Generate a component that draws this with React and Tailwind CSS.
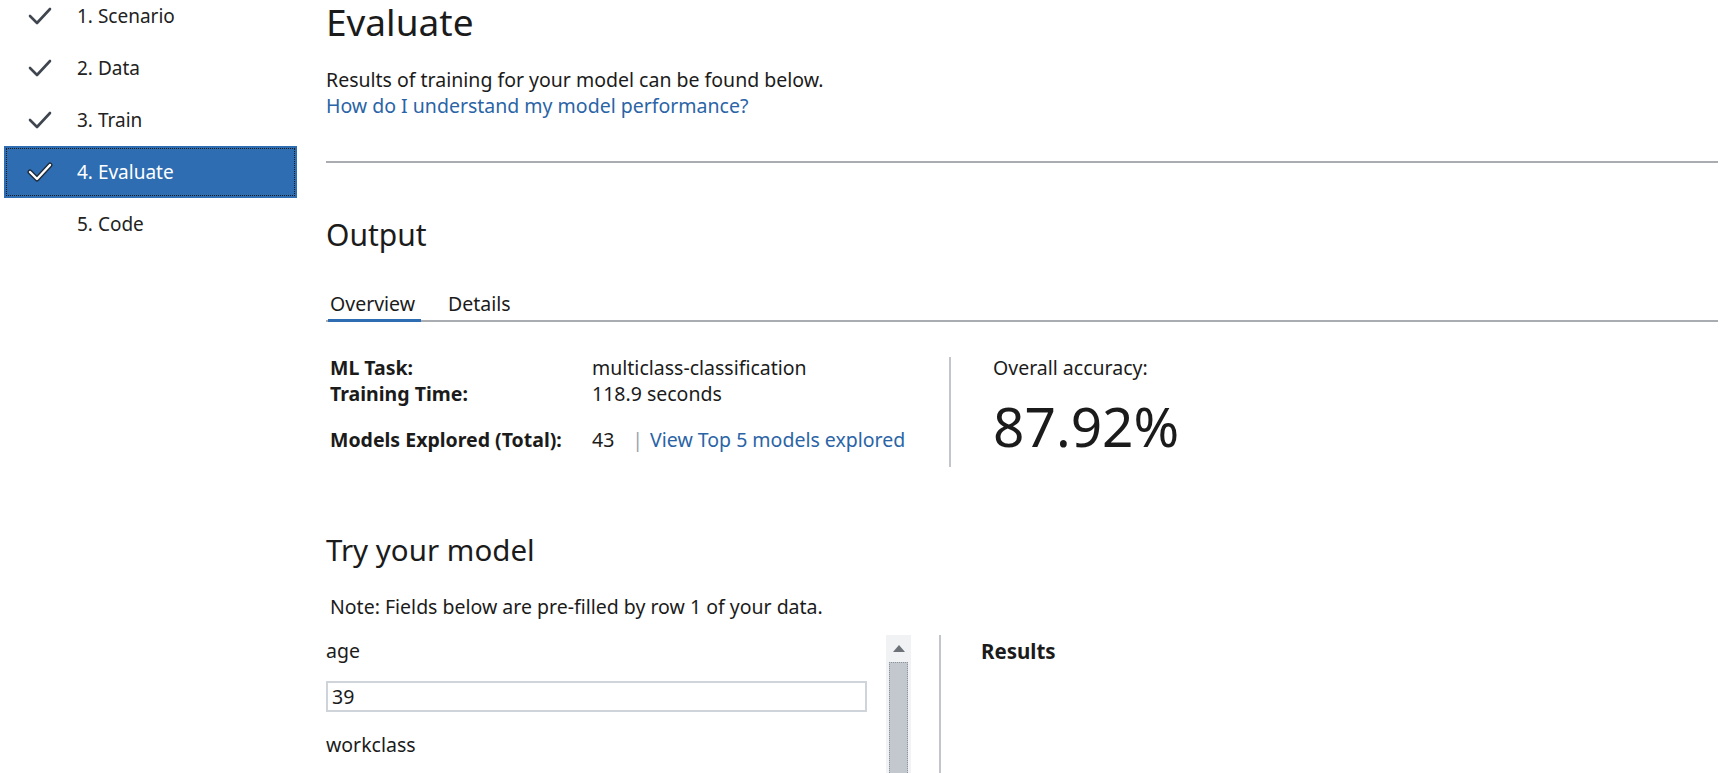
import React from "react";

const steps = [
  { label: "1. Scenario", done: true },
  { label: "2. Data", done: true },
  { label: "3. Train", done: true },
  { label: "4. Evaluate", done: true, active: true },
  { label: "5. Code", done: false },
];

function Check({ active }) {
  return (
    <svg width="26" height="22" viewBox="0 0 26 22" fill="none">
      {active && (
        <polyline points="3,11 10,18 23,4" stroke="#1e2a38" strokeWidth="5" strokeLinecap="round" strokeLinejoin="round" />
      )}
      <polyline
        points="3,11 10,18 23,4"
        stroke={active ? "#ffffff" : "#3f464f"}
        strokeWidth={active ? "2.4" : "2.6"}
        strokeLinecap="round"
        strokeLinejoin="round"
      />
    </svg>
  );
}

function Sidebar() {
  return (
    <div className="w-[326px] shrink-0 pl-[4px] -mt-[10px]">
      {steps.map((s) => (
        <div
          key={s.label}
          className={
            s.active
              ? "flex h-[52px] w-[293px] items-center bg-[#2e6db2] text-white outline-dotted outline-1 outline-[#1b1b1b] -outline-offset-[3px]"
              : "flex h-[52px] w-[293px] items-center text-[#222]"
          }
        >
          <div className="ml-[23px] flex w-[26px] justify-center">{s.done && <Check active={s.active} />}</div>
          <span className="ml-[24px] text-[19px] leading-[52px]">{s.label}</span>
        </div>
      ))}
    </div>
  );
}

function Stats() {
  return (
    <div className="mt-[33px] flex">
      <div className="w-[623px] pl-[4px] text-[19.5px] text-[#1b1b1b]">
        <div className="flex leading-[26px]">
          <span className="w-[262px] font-bold">ML Task:</span>
          <span>multiclass-classification</span>
        </div>
        <div className="flex leading-[26px]">
          <span className="w-[262px] font-bold">Training Time:</span>
          <span>118.9 seconds</span>
        </div>
        <div className="mt-[20px] flex leading-[26px]">
          <span className="w-[262px] font-bold">Models Explored (Total):</span>
          <span>43</span>
          <span className="ml-[18px] text-[#9aa3ad]">|</span>
          <a className="ml-[7px] text-[#2a64a6]">View Top 5 models explored</a>
        </div>
      </div>
      <div className="mt-[2px] h-[110px] w-[2px] bg-[#c2c6cb]" />
      <div className="pl-[42px] text-[#1b1b1b]">
        <div className="text-[19.5px] leading-[26px]">Overall accuracy:</div>
        <div className="mt-[15px] text-[55px] leading-[60px]">87.92%</div>
      </div>
    </div>
  );
}

function TryModel() {
  return (
    <div className="mt-[65px]">
      <h2 className="text-[29.5px] leading-[36px] text-[#1b1b1b]">Try your model</h2>
      <p className="mt-[26px] pl-[4px] text-[19.5px] leading-[26px] text-[#1b1b1b]">
        Note: Fields below are pre-filled by row 1 of your data.
      </p>
      <div className="mt-[15px] flex">
        <div className="w-[560px] text-[19.5px] text-[#1b1b1b]">
          <div className="mt-[3px] leading-[26px]">age</div>
          <div className="mt-[17px] flex h-[31px] w-[541px] items-center border-2 border-[#cfd4da] px-[4px]">39</div>
          <div className="mt-[20px] leading-[26px]">workclass</div>
        </div>
        <div className="flex h-[140px] w-[25px] flex-col items-center bg-[#f1f2f4]">
          <svg width="14" height="9" viewBox="0 0 14 9" className="mt-[9px]">
            <polygon points="7,1 13,8 1,8" fill="#6c7278" />
          </svg>
          <div className="mt-[9px] w-[19px] flex-1 border border-dotted border-[#8d939a] bg-[#c3c8cf]" />
        </div>
        <div className="ml-[28px] h-[140px] w-[2px] bg-[#c2c6cb]" />
        <div className="pl-[40px] pt-[3px] text-[20.5px] font-bold leading-[26px] text-[#1b1b1b]">Results</div>
      </div>
    </div>
  );
}

export default function App() {
  return (
    <div className="flex h-[773px] w-[1725px] overflow-hidden bg-white font-['Noto_Sans',sans-serif]">
      <Sidebar />
      <div className="flex-1 pr-[7px]">
        <h1 className="text-[37px] leading-[44px] text-[#1b1b1b]">Evaluate</h1>
        <p className="mt-[23px] text-[19.5px] leading-[26px] text-[#1b1b1b]">
          Results of training for your model can be found below.
        </p>
        <a className="block text-[19.5px] leading-[26px] text-[#2a64a6]">How do I understand my model performance?</a>
        <div className="mt-[42px] h-[2px] bg-[#a9adb2]" />
        <h2 className="mt-[53px] text-[30px] leading-[38px] text-[#1b1b1b]">Output</h2>
        <div className="mt-[35px] flex border-b-2 border-[#a9adb2]">
          <div className="-mb-[2px] ml-[2px] border-b-[3px] border-[#2e6db2] pl-[2px] pr-[6px] text-[19.5px] leading-[30px] text-[#1b1b1b]">
            Overview
          </div>
          <div className="ml-[27px] text-[19.5px] leading-[30px] text-[#1b1b1b]">Details</div>
        </div>
        <Stats />
        <TryModel />
      </div>
    </div>
  );
}
